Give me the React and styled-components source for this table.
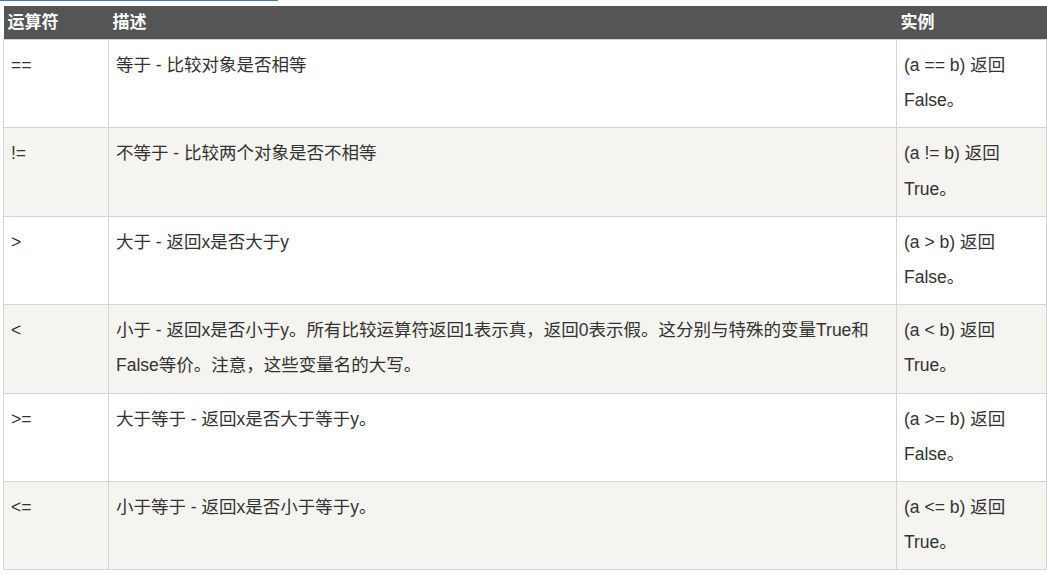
import React from "react";
import styled, { createGlobalStyle } from "styled-components";

const GlobalStyle = createGlobalStyle`
  body {
    margin: 0;
    background: #fff;
    font-family: "Liberation Sans", "Noto Sans CJK SC", sans-serif;
    color: #333;
  }
`;

const Page = styled.div`
  width: 1047px;
  height: 574px;
  overflow: hidden;
  background: #fff;
`;

const TopRule = styled.div`
  width: 278px;
  height: 1px;
  background: #3a73d9;
  margin-bottom: 5px;
`;

const Table = styled.table`
  border-collapse: collapse;
  table-layout: fixed;
  width: 1044px;
  margin-left: 3px;
  font-size: 17.5px;
`;

const HeadCell = styled.th`
  background: #555;
  color: #fff;
  font-weight: bold;
  font-size: 17px;
  text-align: left;
  line-height: 27px;
  padding: 3px 5px 3px 4px;
  vertical-align: top;
  width: ${({ $w }) => $w || "auto"};
`;

const Row = styled.tr`
  background: ${({ $alt }) => ($alt ? "#f6f4f0" : "#fff")};
`;

const Cell = styled.td`
  border: 1px solid #d4d4d4;
  padding: 8px 7px 9px;
  line-height: 35.2px;
  vertical-align: top;
  color: #333;
`;

const rows = [
  ["==", "等于 - 比较对象是否相等", "(a == b) 返回 False。"],
  ["!=", "不等于 - 比较两个对象是否不相等", "(a != b) 返回 True。"],
  [">", "大于 - 返回x是否大于y", "(a > b) 返回 False。"],
  [
    "<",
    <>
      小于 - 返回x是否小于y。所有比较运算符返回1表示真，返回0表示假。这分别与特殊的变量True和
      <br />
      False等价。注意，这些变量名的大写。
    </>,
    "(a < b) 返回 True。",
  ],
  [">=", "大于等于 - 返回x是否大于等于y。", "(a >= b) 返回 False。"],
  ["<=", "小于等于 - 返回x是否小于等于y。", "(a <= b) 返回 True。"],
];

export default function App() {
  return (
    <Page>
      <GlobalStyle />
      <TopRule />
      <Table>
        <thead>
          <tr>
            <HeadCell $w="96px">运算符</HeadCell>
            <HeadCell $w="779px">描述</HeadCell>
            <HeadCell>实例</HeadCell>
          </tr>
        </thead>
        <tbody>
          {rows.map((r, i) => (
            <Row $alt={i % 2 === 1} key={i}>
              <Cell>{r[0]}</Cell>
              <Cell>{r[1]}</Cell>
              <Cell>{r[2]}</Cell>
            </Row>
          ))}
        </tbody>
      </Table>
    </Page>
  );
}
